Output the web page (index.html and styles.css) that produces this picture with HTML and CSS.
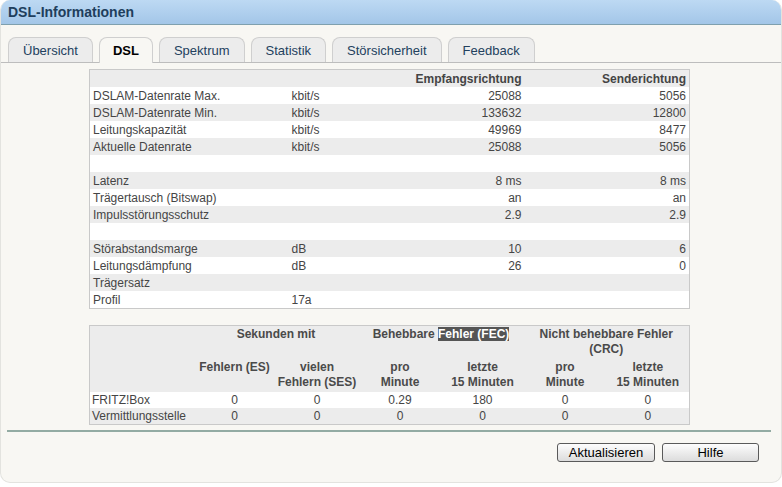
FILE: index.html
```html
<!DOCTYPE html>
<html lang="de">

<head>
    <meta charset="UTF-8">
    <title>DSL-Informationen</title>
    <link rel="stylesheet" href="styles.css">
</head>

<body>
    <div class="window">
        <div class="titlebar">
            <h1>DSL-Informationen</h1>
        </div>

        <ul class="tabs">
            <li class="tab">Übersicht</li>
            <li class="tab active">DSL</li>
            <li class="tab">Spektrum</li>
            <li class="tab">Statistik</li>
            <li class="tab">Störsicherheit</li>
            <li class="tab">Feedback</li>
        </ul>

        <div class="content">
            <table class="info">
                <colgroup>
                    <col class="c-label">
                    <col class="c-unit">
                    <col class="c-rx">
                    <col class="c-tx">
                </colgroup>
                <tr class="head">
                    <th></th>
                    <th></th>
                    <th>Empfangsrichtung</th>
                    <th>Senderichtung</th>
                </tr>
                <tr><td>DSLAM-Datenrate Max.</td><td>kbit/s</td><td class="num">25088</td><td class="num">5056</td></tr>
                <tr><td>DSLAM-Datenrate Min.</td><td>kbit/s</td><td class="num">133632</td><td class="num">12800</td></tr>
                <tr><td>Leitungskapazität</td><td>kbit/s</td><td class="num">49969</td><td class="num">8477</td></tr>
                <tr><td>Aktuelle Datenrate</td><td>kbit/s</td><td class="num">25088</td><td class="num">5056</td></tr>
                <tr><td></td><td></td><td></td><td></td></tr>
                <tr><td>Latenz</td><td></td><td class="num">8 ms</td><td class="num">8 ms</td></tr>
                <tr><td>Trägertausch (Bitswap)</td><td></td><td class="num">an</td><td class="num">an</td></tr>
                <tr><td>Impulsstörungsschutz</td><td></td><td class="num">2.9</td><td class="num">2.9</td></tr>
                <tr><td></td><td></td><td></td><td></td></tr>
                <tr><td>Störabstandsmarge</td><td>dB</td><td class="num">10</td><td class="num">6</td></tr>
                <tr><td>Leitungsdämpfung</td><td>dB</td><td class="num">26</td><td class="num">0</td></tr>
                <tr><td>Trägersatz</td><td></td><td></td><td></td></tr>
                <tr><td>Profil</td><td>17a</td><td></td><td></td></tr>
            </table>

            <table class="errors">
                <colgroup>
                    <col class="e-label">
                    <col class="e-a">
                    <col class="e-b">
                    <col class="e-b">
                    <col class="e-a">
                    <col class="e-b">
                    <col class="e-b">
                </colgroup>
                <tr class="head first">
                    <th></th>
                    <th colspan="2">Sekunden mit</th>
                    <th colspan="2">Behebbare <span class="marked">Fehler (FEC)</span></th>
                    <th colspan="2" class="wrap">Nicht behebbare Fehler (CRC)</th>
                </tr>
                <tr class="head second">
                    <th></th>
                    <th>Fehlern (ES)</th>
                    <th>vielen<br>Fehlern (SES)</th>
                    <th>pro<br>Minute</th>
                    <th>letzte<br>15 Minuten</th>
                    <th>pro<br>Minute</th>
                    <th>letzte<br>15 Minuten</th>
                </tr>
                <tr class="odd">
                    <td>FRITZ!Box</td>
                    <td>0</td><td>0</td><td>0.29</td><td>180</td><td>0</td><td>0</td>
                </tr>
                <tr class="even">
                    <td>Vermittlungsstelle</td>
                    <td>0</td><td>0</td><td>0</td><td>0</td><td>0</td><td>0</td>
                </tr>
            </table>
        </div>

        <div class="footer">
            <button type="button">Aktualisieren</button>
            <button type="button" class="help">Hilfe</button>
        </div>
    </div>
</body>

</html>
```

FILE: styles.css
```css
/* Global reset */

* {
    margin: 0;
    padding: 0;
    box-sizing: border-box;
}

body {
    font-family: 'Liberation Sans', Arial, sans-serif;
    background-color: #fff;
    color: #454545;
}

.window {
    width: 782px;
    height: 483px;
    background-color: #f8f7f3;
    border: 1px solid #e3e3df;
    border-top: none;
    border-radius: 10px;
    overflow: hidden;
}

.titlebar {
    height: 25px;
    background: linear-gradient(#bdd9f3, #a3c6e8);
    border-bottom: 1px solid #7fa0ae;
}

.titlebar h1 {
    font-size: 14px;
    font-weight: bold;
    color: #203e5c;
    line-height: 25px;
    padding-left: 7px;
}

/* Tabs */

.tabs {
    list-style: none;
    display: flex;
    gap: 6px;
    margin-top: 12px;
    padding-left: 7px;
    border-bottom: 1px solid #bdbdbd;
}

.tab {
    height: 25px;
    line-height: 25px;
    padding: 0 14px;
    font-size: 13px;
    color: #23415e;
    background-color: #ececec;
    border: 1px solid #cfcfcf;
    border-bottom: none;
    border-radius: 8px 8px 0 0;
}

.tab.active {
    background-color: #f8f7f3;
    color: #000;
    font-weight: bold;
    padding: 0 13px;
    margin-bottom: -1px;
    height: 26px;
}

/* Tables */

.content {
    padding: 6px 0 0 88px;
}

table {
    width: 600px;
    border-collapse: collapse;
    table-layout: fixed;
    border: 1px solid #c9c9c9;
    font-size: 12px;
    background-color: #fff;
}

.info tr {
    height: 17px;
}

.info tr:nth-child(odd) {
    background-color: #ececec;
}

.info th,
.info td {
    padding: 2px 3px 0;
    line-height: 15px;
    text-align: left;
    white-space: nowrap;
}

.info th {
    font-weight: bold;
    color: #444;
    text-align: right;
}

.info .num {
    text-align: right;
}

.c-label {
    width: 199px;
}

.c-unit {
    width: 112px;
}

.c-rx {
    width: 124px;
}

.c-tx {
    width: 165px;
}

.errors {
    margin-top: 16px;
}

.e-label {
    width: 104px;
}

.e-a {
    width: 82px;
}

.e-b {
    width: 83px;
}

.errors .head {
    background-color: #ececec;
}

.errors th {
    font-weight: bold;
    color: #4a4a4a;
    line-height: 15px;
    vertical-align: top;
    padding: 1px 0 1px;
    text-align: center;
    white-space: nowrap;
}

.errors .second th {
    padding: 2px 0 2px;
}

.errors th.wrap {
    white-space: normal;
    padding-left: 4px;
    padding-right: 4px;
}

.errors td {
    height: 16px;
    padding: 1px 2px 0;
    line-height: 15px;
    text-align: center;
}

.errors td:first-child {
    text-align: left;
}

.errors .even {
    background-color: #ececec;
}

.marked {
    background-color: #555;
    color: #fff;
}

/* Footer */

.footer {
    margin: 5px 10px 0 6px;
    border-top: 2px solid #93aba3;
    padding: 11px 12px 0 0;
    display: flex;
    justify-content: flex-end;
    gap: 7px;
}

.footer button {
    width: 98px;
    height: 19px;
    font-family: 'Liberation Sans', Arial, sans-serif;
    font-size: 13px;
    color: #000;
    background: linear-gradient(#fdfdfd, #dcdcdc);
    border: 1px solid #5a5a5a;
    border-radius: 3px;
}

.footer .help {
    width: 97px;
}
```
